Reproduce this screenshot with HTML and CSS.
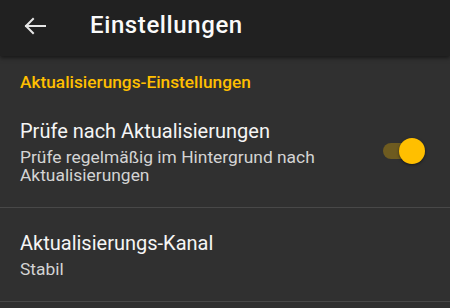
FILE: index.html
```html
<!DOCTYPE html>
<html lang="de">
<head>
    <meta charset="UTF-8">
    <title>Einstellungen</title>
    <link rel="stylesheet" href="styles.css">
</head>
<body>

<div class="toolbar">
    <!-- Zurück -->
    <div class="back">
        <svg width="22" height="18" viewBox="0 0 22 18">
            <path d="M2 9H21M2 9L9 2M2 9L9 16" fill="none" stroke="#e6e6e6" stroke-width="2" stroke-linecap="square"/>
        </svg>
    </div>
    <div class="title">Einstellungen</div>
</div>

<div class="category">Aktualisierungs-Einstellungen</div>

<div class="pref pref-check">
    <div class="pref-text">
        <div class="pref-title">Prüfe nach Aktualisierungen</div>
        <div class="pref-summary">Prüfe regelmäßig im Hintergrund nach Aktualisierungen</div>
    </div>
    <div class="switch on">
        <div class="track"></div>
        <div class="thumb"></div>
    </div>
</div>

<div class="pref pref-channel">
    <div class="pref-text">
        <div class="pref-title">Aktualisierungs-Kanal</div>
        <div class="pref-summary">Stabil</div>
    </div>
</div>

</body>
</html>
```
FILE: styles.css
```css
body {
    margin: 0;
    background-color: #303030;
    font-family: Roboto, "Noto Sans", sans-serif;
    color: #fff;
    overflow: hidden;
}
.toolbar {
    height: 56px;
    background-color: #212121;
    display: flex;
    align-items: flex-start;
    box-shadow: 0 2px 4px rgba(0, 0, 0, 0.5);
    position: relative;
}
.back {
    width: 22px;
    height: 18px;
    margin: 17px 0 0 24px;
    display: flex;
}
.title {
    margin: 11px 0 0 44px;
    font-size: 24px;
    line-height: 28px;
    letter-spacing: 0.6px;
    font-weight: 500;
    color: #fafafa;
}
.category {
    padding: 16px 20px 0;
    height: 40px;
    box-sizing: border-box;
    font-size: 17.3px;
    line-height: 20px;
    font-weight: 500;
    color: #ffbf00;
}
.pref {
    display: flex;
    align-items: center;
    padding: 0 24px 0 20px;
    border-bottom: 1px solid #484848;
}
.pref-check {
    height: 111px;
}
.pref-channel {
    height: 93px;
}
.pref-text {
    flex: 1;
}
.pref-title {
    font-size: 20px;
    line-height: 24px;
    color: #f5f5f5;
}
.pref-summary {
    margin-top: 5px;
    font-size: 17.4px;
    line-height: 18.5px;
    color: #d4d4d4;
    max-width: 310px;
}
/* Schalter */
.switch {
    width: 44px;
    height: 28px;
    position: relative;
    margin-left: 18px;
}
.track {
    position: absolute;
    left: 1px;
    top: 5px;
    width: 36px;
    height: 16px;
    border-radius: 8px;
    background-color: #6e5b20;
}
.thumb {
    position: absolute;
    left: 17px;
    top: 0;
    width: 26px;
    height: 26px;
    border-radius: 50%;
    background-color: #ffbf00;
    box-shadow: 0 1px 3px rgba(0, 0, 0, 0.5);
}
```
